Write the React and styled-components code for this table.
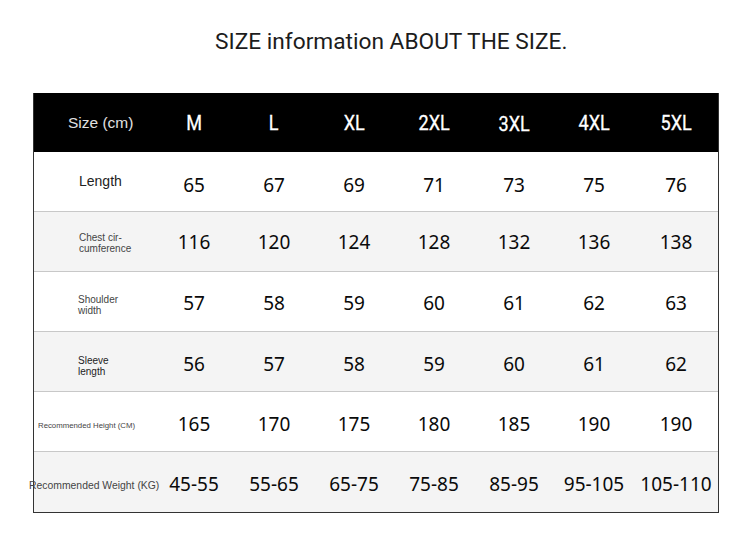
import React from 'react'
import styled, { createGlobalStyle } from 'styled-components'

const GlobalStyle = createGlobalStyle`
  html, body {
    margin: 0;
    padding: 0;
    background: #fff;
  }
`

const Page = styled.div`
  width: 750px;
  height: 548px;
  background: #fff;
  padding-top: 28px;
  box-sizing: border-box;
`

const Title = styled.h1`
  margin: 0 0 0 215px;
  font-family: Roboto, "Liberation Sans", sans-serif;
  font-weight: 400;
  font-size: 22.7px;
  line-height: 28px;
  color: #1c1c1c;
  white-space: nowrap;
`

const Table = styled.div`
  margin: 37px 0 0 33px;
  width: 686px;
  border: 1px solid #333;
  border-top: none;
  box-sizing: border-box;
`

const Row = styled.div`
  display: grid;
  grid-template-columns: 120px repeat(6, 80px) 1fr;
  height: ${p => (p.$head ? '59px' : '60px')};
  background: ${p => (p.$head ? '#000' : p.$shade ? '#f4f4f4' : '#fff')};
  border-bottom: ${p => (p.$last || p.$head ? 'none' : '1px solid #c8c8c8')};
  box-sizing: border-box;
`

const HeadLabel = styled.div`
  display: flex;
  align-items: center;
  padding-left: 34px;
  font-family: "Liberation Sans", Arial, sans-serif;
  font-size: 15.5px;
  color: #e0e0e0;
  white-space: nowrap;
`

const HeadCell = styled.div`
  display: flex;
  align-items: center;
  justify-content: center;
  padding-top: ${p => p.$dy || 0}px;
`

const HeadText = styled.span`
  display: inline-block;
  font-family: Roboto, "Liberation Sans", sans-serif;
  font-size: 21px;
  font-weight: 400;
  color: #fff;
  transform: scaleX(0.86);
  -webkit-text-stroke: 0.3px #fff;
`

const Label = styled.div`
  display: flex;
  align-items: center;
  margin-left: ${p => p.$pad}px;
  font-family: "Liberation Sans", Arial, sans-serif;
  font-size: ${p => p.$size}px;
  line-height: 1.05;
  color: ${p => p.$color || '#444'};
  white-space: nowrap;
  padding-top: ${p => p.$down || 0}px;
`

const Cell = styled.div`
  display: flex;
  align-items: center;
  justify-content: center;
  font-family: "Noto Sans", "Open Sans", sans-serif;
  font-size: 19px;
  color: #0a0a0a;
  white-space: nowrap;
  padding-top: ${p => p.$dy || 0}px;
`

const sizes = ['M', 'L', 'XL', '2XL', '3XL', '4XL', '5XL']

const rows = [
  { label: 'Length', size: 14, pad: 45, down: 0, color: '#222', values: ['65', '67', '69', '71', '73', '75', '76'], dy: 6 },
  { label: <>Chest cir-<br />cumference</>, size: 10, pad: 45, down: 4, values: ['116', '120', '124', '128', '132', '136', '138'] },
  { label: <>Shoulder<br />width</>, size: 10, pad: 44, down: 8, values: ['57', '58', '59', '60', '61', '62', '63'], dy: 2 },
  { label: <>Sleeve<br />length</>, size: 10, pad: 44, down: 10, color: '#222', values: ['56', '57', '58', '59', '60', '61', '62'], dy: 4 },
  { label: 'Recommended Height (CM)', size: 7.8, pad: 4, down: 10, values: ['165', '170', '175', '180', '185', '190', '190'], dy: 4 },
  { label: 'Recommended Weight (KG)', size: 10.4, pad: -5, down: 8, values: ['45-55', '55-65', '65-75', '75-85', '85-95', '95-105', '105-110'], dy: 4 }
]

const App = () => (
  <Page>
    <GlobalStyle />
    <Title>SIZE information ABOUT THE SIZE.</Title>
    <Table>
      <Row $head>
        <HeadLabel>Size (cm)</HeadLabel>
        {sizes.map(s => (
          <HeadCell key={s} $dy={s === '3XL' ? 2 : 0}>
            <HeadText>{s}</HeadText>
          </HeadCell>
        ))}
      </Row>
      {rows.map((r, i) => (
        <Row key={i} $shade={i % 2 === 1} $last={i === rows.length - 1}>
          <Label $size={r.size} $pad={r.pad} $down={r.down} $color={r.color}>
            {r.label}
          </Label>
          {r.values.map((v, j) => (
            <Cell key={j} $dy={r.dy}>{v}</Cell>
          ))}
        </Row>
      ))}
    </Table>
  </Page>
)

export default App
